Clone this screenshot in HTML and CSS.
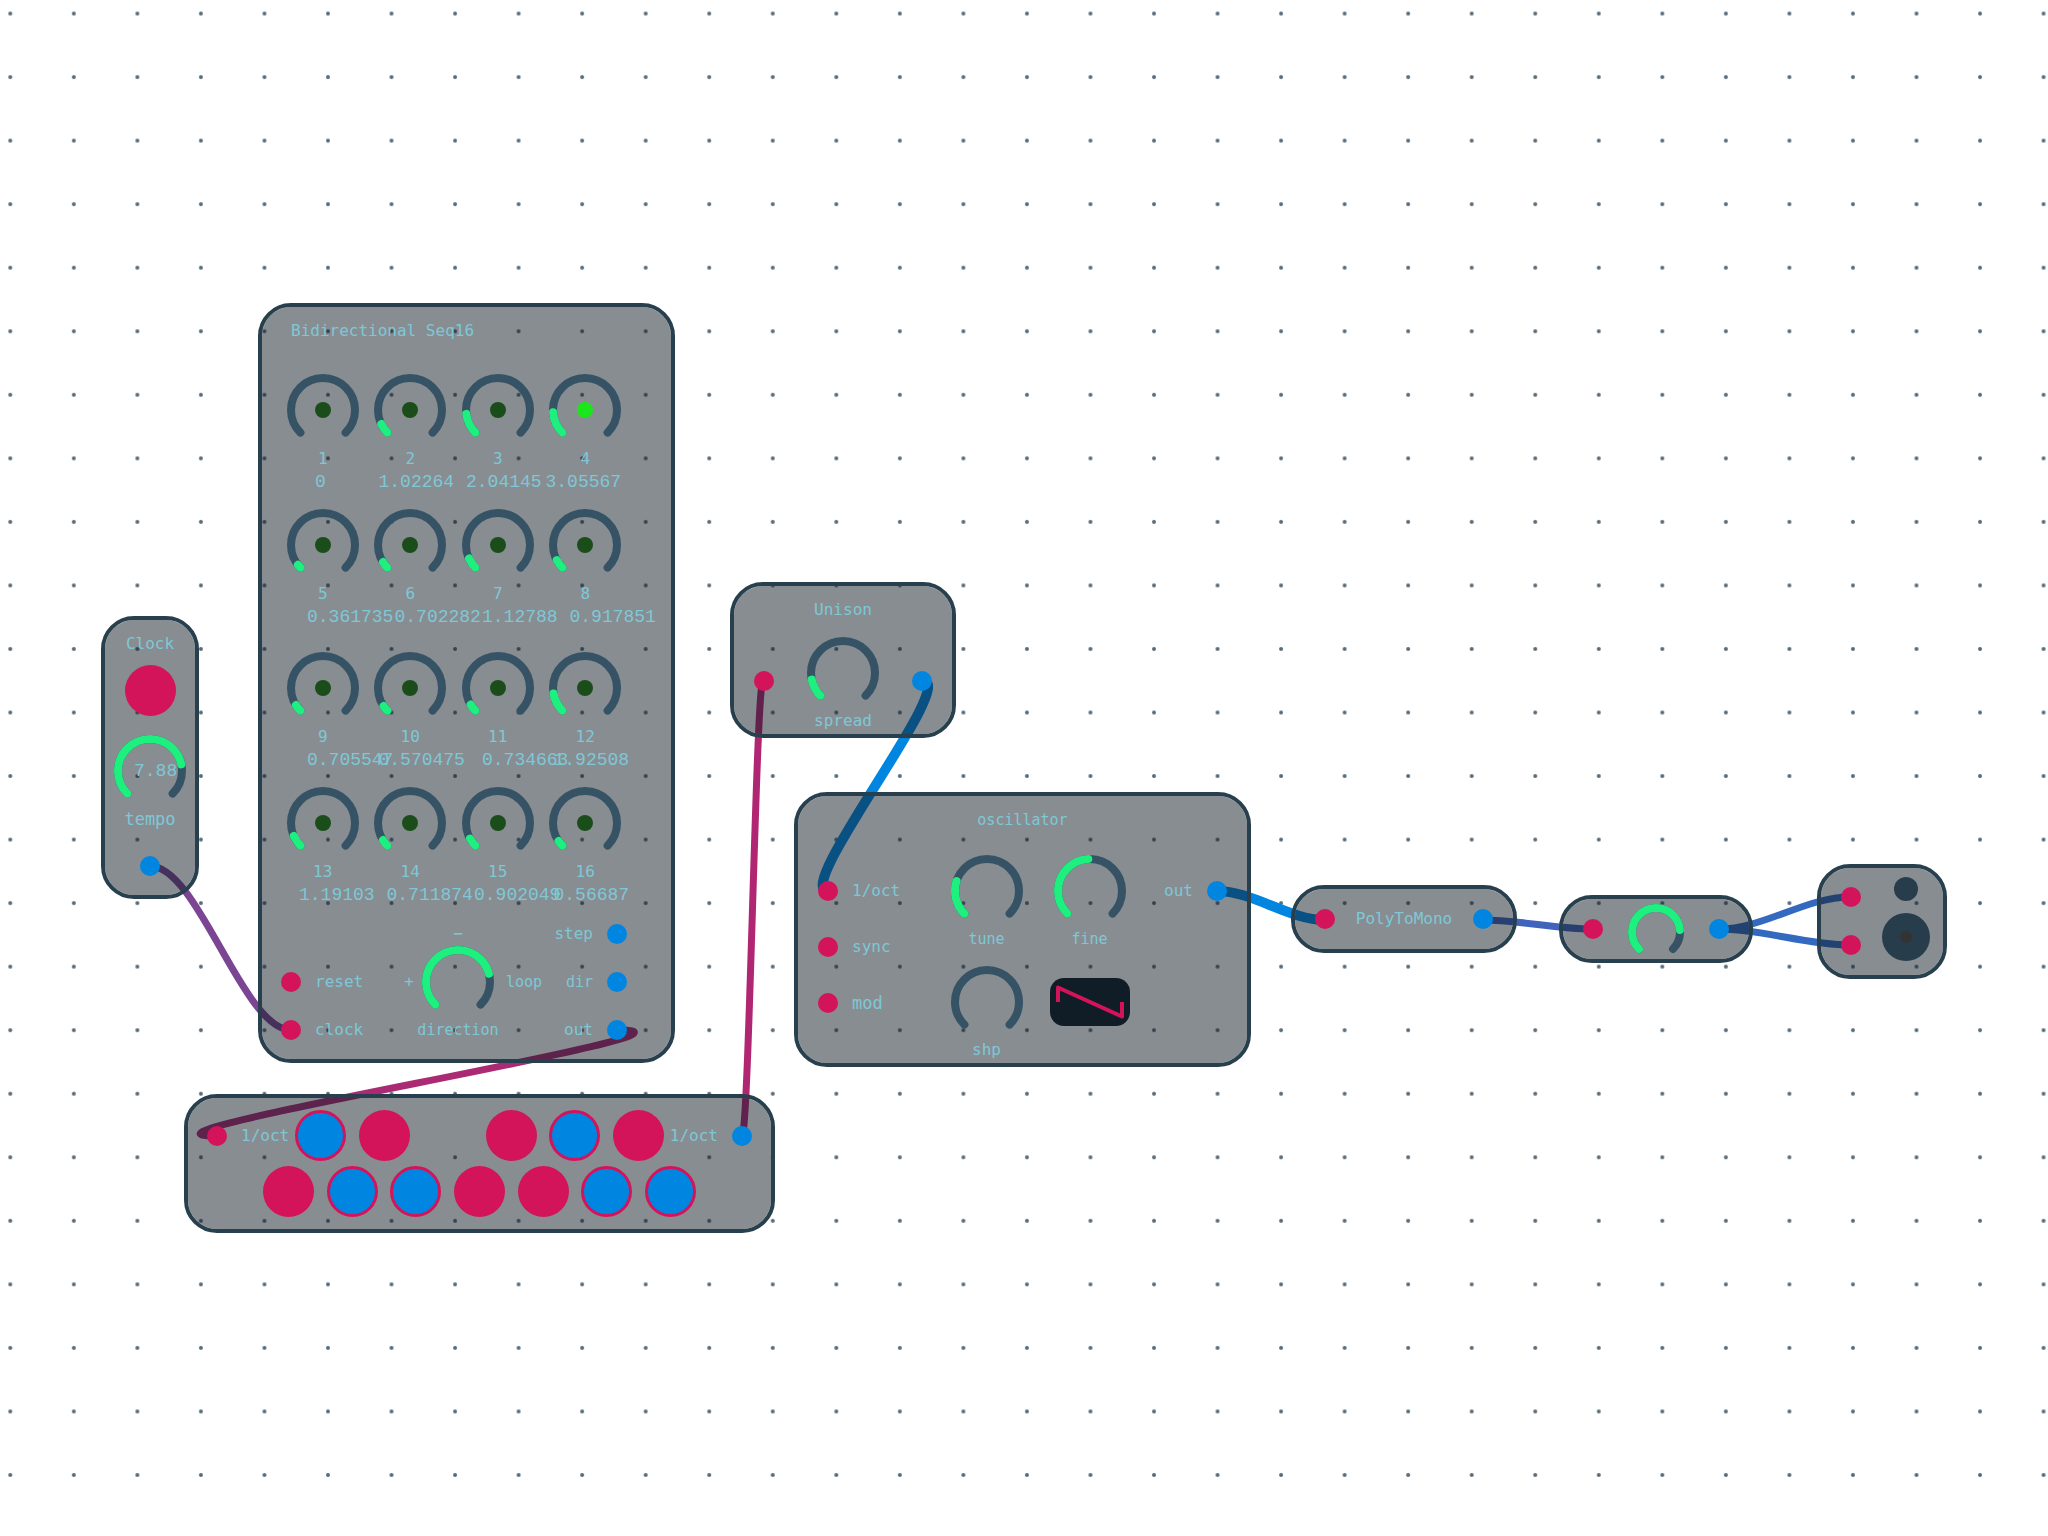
FILE: index.html
```html
<!DOCTYPE html>
<html lang="en">
<head>
<meta charset="utf-8">
<meta name="viewport" content="width=device-width, initial-scale=1">
<title>Modular patch</title>
<link rel="stylesheet" href="styles.css">
</head>
<body>
<svg class="defs" aria-hidden="true">
  <defs>
    <path id="arc" d="M-22.6 22.6A32 32 0 1 1 22.6 22.6" pathLength="270"/>
    <path id="arc-small" d="M-17 17A24 24 0 1 1 17 17" pathLength="270"/>
  </defs>
</svg>
<main class="patch">
  <svg class="backdrop" aria-hidden="true">
    <defs>
      <pattern id="dots" x="-21.5" y="-18.2" width="63.54" height="63.54" patternUnits="userSpaceOnUse">
        <circle cx="31.8" cy="31.8" r="2" fill="#566a79"/>
      </pattern>
    </defs>
    <rect width="100%" height="100%" fill="url(#dots)"/>
    <g class="cables">
      <path stroke="#7b4594" d="M150 866C198 866 243 1030 291 1030"/>
      <path stroke="#ab2a74" d="M617 1030C748 1030 88 1136 217 1136"/>
      <path stroke="#b12673" d="M742 1136C749 1136 756 681 763 681"/>
      <path class="poly" stroke="#0085e0" d="M923 681C959 681 791 891 828 891"/>
      <path class="poly" stroke="#0085e0" d="M1217 891C1253 891 1289 920 1325 920"/>
      <path stroke="#4063bb" d="M1483 920C1519 920 1556 929 1592 929"/>
      <path stroke="#336abf" d="M1719 929C1763 929 1806 897 1850 897"/>
      <path stroke="#336abf" d="M1719 929C1763 929 1806 945 1850 945"/>
    </g>
  </svg>

  <section class="module clock" aria-label="Clock">
    <h2>Clock</h2>
    <button class="pad" type="button" aria-label="Tap"></button>
    <label class="control">
      <span class="knob">
        <svg viewBox="-36 -36 72 72"><use href="#arc"/><use class="level" href="#arc" stroke-dasharray="213 400"/></svg>
        <span class="reading">7.88</span>
        <input type="range" min="0" max="270" value="213">
      </span>
      <span class="name large">tempo</span>
    </label>
    <button class="port out" type="button" aria-label="Clock out"></button>
  </section>

  <section class="module sequencer" aria-label="Bidirectional Seq16">
    <h2>Bidirectional Seq16</h2>
    <div class="bank">
      <label class="control"><span class="knob lamp"><svg viewBox="-36 -36 72 72"><use href="#arc"/><circle r="8"/></svg><input type="range" min="0" max="270" value="0"></span><span class="name">1</span><output class="in-5">0</output></label>
      <label class="control"><span class="knob lamp"><svg viewBox="-36 -36 72 72"><use href="#arc"/><use class="level" href="#arc" stroke-dasharray="19 400"/><circle r="8"/></svg><input type="range" min="0" max="270" value="19"></span><span class="name">2</span><output class="in-2">1.02264</output></label>
      <label class="control"><span class="knob lamp"><svg viewBox="-36 -36 72 72"><use href="#arc"/><use class="level" href="#arc" stroke-dasharray="38 400"/><circle r="8"/></svg><input type="range" min="0" max="270" value="38"></span><span class="name">3</span><output class="in-2">2.04145</output></label>
      <label class="control"><span class="knob lamp lit"><svg viewBox="-36 -36 72 72"><use href="#arc"/><use class="level" href="#arc" stroke-dasharray="41 400"/><circle r="8"/></svg><input type="range" min="0" max="270" value="41"></span><span class="name">4</span><output class="in-1">3.05567</output></label>
      <label class="control"><span class="knob lamp"><svg viewBox="-36 -36 72 72"><use href="#arc"/><use class="level" href="#arc" stroke-dasharray="7 400"/><circle r="8"/></svg><input type="range" min="0" max="270" value="7"></span><span class="name">5</span><output class="in-4">0.361735</output></label>
      <label class="control"><span class="knob lamp"><svg viewBox="-36 -36 72 72"><use href="#arc"/><use class="level" href="#arc" stroke-dasharray="13 400"/><circle r="8"/></svg><input type="range" min="0" max="270" value="13"></span><span class="name">6</span><output class="in-4">0.702282</output></label>
      <label class="control"><span class="knob lamp"><svg viewBox="-36 -36 72 72"><use href="#arc"/><use class="level" href="#arc" stroke-dasharray="20 400"/><circle r="8"/></svg><input type="range" min="0" max="270" value="20"></span><span class="name">7</span><output class="in-4">1.12788</output></label>
      <label class="control"><span class="knob lamp"><svg viewBox="-36 -36 72 72"><use href="#arc"/><use class="level" href="#arc" stroke-dasharray="17 400"/><circle r="8"/></svg><input type="range" min="0" max="270" value="17"></span><span class="name">8</span><output class="in-4">0.917851</output></label>
    </div>
    <div class="bank">
      <label class="control"><span class="knob lamp"><svg viewBox="-36 -36 72 72"><use href="#arc"/><use class="level" href="#arc" stroke-dasharray="13 400"/><circle r="8"/></svg><input type="range" min="0" max="270" value="13"></span><span class="name">9</span><output class="in-4">0.705547</output></label>
      <label class="control"><span class="knob lamp"><svg viewBox="-36 -36 72 72"><use href="#arc"/><use class="level" href="#arc" stroke-dasharray="11 400"/><circle r="8"/></svg><input type="range" min="0" max="270" value="11"></span><span class="name">10</span><output class="in-2">0.570475</output></label>
      <label class="control"><span class="knob lamp"><svg viewBox="-36 -36 72 72"><use href="#arc"/><use class="level" href="#arc" stroke-dasharray="14 400"/><circle r="8"/></svg><input type="range" min="0" max="270" value="14"></span><span class="name">11</span><output class="in-4">0.734663</output></label>
      <label class="control"><span class="knob lamp"><svg viewBox="-36 -36 72 72"><use href="#arc"/><use class="level" href="#arc" stroke-dasharray="35 400"/><circle r="8"/></svg><input type="range" min="0" max="270" value="35"></span><span class="name">12</span><output class="in-2">1.92508</output></label>
      <label class="control"><span class="knob lamp"><svg viewBox="-36 -36 72 72"><use href="#arc"/><use class="level" href="#arc" stroke-dasharray="21 400"/><circle r="8"/></svg><input type="range" min="0" max="270" value="21"></span><span class="name">13</span><output class="in-3">1.19103</output></label>
      <label class="control"><span class="knob lamp"><svg viewBox="-36 -36 72 72"><use href="#arc"/><use class="level" href="#arc" stroke-dasharray="13 400"/><circle r="8"/></svg><input type="range" min="0" max="270" value="13"></span><span class="name">14</span><output class="in-3">0.711874</output></label>
      <label class="control"><span class="knob lamp"><svg viewBox="-36 -36 72 72"><use href="#arc"/><use class="level" href="#arc" stroke-dasharray="16 400"/><circle r="8"/></svg><input type="range" min="0" max="270" value="16"></span><span class="name">15</span><output class="in-3">0.902049</output></label>
      <label class="control"><span class="knob lamp"><svg viewBox="-36 -36 72 72"><use href="#arc"/><use class="level" href="#arc" stroke-dasharray="11 400"/><circle r="8"/></svg><input type="range" min="0" max="270" value="11"></span><span class="name">16</span><output class="in-2">0.56687</output></label>
    </div>
    <div class="patchbay">
      <div class="jacks inputs">
        <div class="jack"><button class="port in" type="button" aria-labelledby="reset-name"></button><span class="name" id="reset-name">reset</span></div>
        <div class="jack"><button class="port in" type="button" aria-labelledby="clock-name"></button><span class="name" id="clock-name">clock</span></div>
      </div>
      <div class="direction">
        <span class="name">−</span>
        <div class="dial">
          <span class="name plus">+</span>
          <span class="knob">
            <svg viewBox="-36 -36 72 72"><use href="#arc"/><use class="level" href="#arc" stroke-dasharray="210 400"/></svg>
            <input type="range" id="direction" min="0" max="270" value="210">
          </span>
          <span class="name loop small">loop</span>
        </div>
        <label class="name small" for="direction">direction</label>
      </div>
      <div class="jacks">
        <div class="jack"><span class="name" id="step-name">step</span><button class="port out" type="button" aria-labelledby="step-name"></button></div>
        <div class="jack"><span class="name small" id="dir-name">dir</span><button class="port out" type="button" aria-labelledby="dir-name"></button></div>
        <div class="jack"><span class="name" id="out-name">out</span><button class="port out" type="button" aria-labelledby="out-name"></button></div>
      </div>
    </div>
  </section>

  <section class="module quantizer" aria-label="Quantizer">
    <div class="keyrow">
      <div class="jack"><button class="port in" type="button" aria-labelledby="qin"></button><span class="name" id="qin">1/oct</span></div>
      <div class="keys sharps">
        <button class="pad on" type="button" aria-label="C sharp"></button>
        <button class="pad" type="button" aria-label="D sharp"></button>
        <span></span>
        <button class="pad" type="button" aria-label="F sharp"></button>
        <button class="pad on" type="button" aria-label="G sharp"></button>
        <button class="pad" type="button" aria-label="A sharp"></button>
      </div>
      <div class="jack"><span class="name" id="qout">1/oct</span><button class="port out" type="button" aria-labelledby="qout"></button></div>
    </div>
    <div class="keys naturals">
      <button class="pad" type="button" aria-label="C"></button>
      <button class="pad on" type="button" aria-label="D"></button>
      <button class="pad on" type="button" aria-label="E"></button>
      <button class="pad" type="button" aria-label="F"></button>
      <button class="pad" type="button" aria-label="G"></button>
      <button class="pad on" type="button" aria-label="A"></button>
      <button class="pad on" type="button" aria-label="B"></button>
    </div>
  </section>

  <section class="module unison" aria-label="Unison">
    <h2>Unison</h2>
    <div class="through">
      <button class="port in" type="button" aria-label="Unison in"></button>
      <label class="control">
        <span class="knob">
          <svg viewBox="-36 -36 72 72"><use href="#arc"/><use class="level" href="#arc" stroke-dasharray="33 400"/></svg>
          <input type="range" min="0" max="270" value="33">
        </span>
        <span class="name">spread</span>
      </label>
      <button class="port out" type="button" aria-label="Unison out"></button>
    </div>
  </section>

  <section class="module oscillator" aria-label="Oscillator">
    <h2 class="small">oscillator</h2>
    <div class="osc-body">
      <div class="jacks">
        <div class="jack"><button class="port in" type="button" aria-labelledby="oct-name"></button><span class="name" id="oct-name">1/oct</span></div>
        <div class="jack"><button class="port in" type="button" aria-labelledby="sync-name"></button><span class="name" id="sync-name">sync</span></div>
        <div class="jack"><button class="port in" type="button" aria-labelledby="mod-name"></button><span class="name large" id="mod-name">mod</span></div>
      </div>
      <div class="osc-knobs">
        <label class="control"><span class="knob"><svg viewBox="-36 -36 72 72"><use href="#arc"/><use class="level" href="#arc" stroke-dasharray="63 400"/></svg><input type="range" min="0" max="270" value="63"></span><span class="name small">tune</span></label>
        <label class="control"><span class="knob"><svg viewBox="-36 -36 72 72"><use href="#arc"/><use class="level" href="#arc" stroke-dasharray="132 400"/></svg><input type="range" min="0" max="270" value="132"></span><span class="name small">fine</span></label>
        <label class="control"><span class="knob"><svg viewBox="-36 -36 72 72"><use href="#arc"/></svg><input type="range" min="0" max="270" value="0"></span><span class="name">shp</span></label>
        <svg class="wave" viewBox="0 0 80 48" role="img" aria-label="Sawtooth wave"><path d="M8 24V9.500L72 38.500V24"/></svg>
      </div>
      <div class="jacks">
        <div class="jack"><span class="name" id="osc-out">out</span><button class="port out" type="button" aria-labelledby="osc-out"></button></div>
      </div>
    </div>
  </section>

  <section class="module bar polytomono" aria-label="PolyToMono">
    <button class="port in" type="button" aria-label="Poly in"></button>
    <h2>PolyToMono</h2>
    <button class="port out" type="button" aria-label="Mono out"></button>
  </section>

  <section class="module bar volume" aria-label="Volume">
    <button class="port in" type="button" aria-label="Volume in"></button>
    <span class="knob compact">
      <svg viewBox="-28 -28 56 56"><use href="#arc-small"/><use class="level" href="#arc-small" stroke-dasharray="220 400"/></svg>
      <input type="range" min="0" max="270" value="220" aria-label="Volume">
    </span>
    <button class="port out" type="button" aria-label="Volume out"></button>
  </section>

  <section class="module speaker" aria-label="Audio output">
    <div class="stereo">
      <button class="port in" type="button" aria-label="Left"></button>
      <button class="port in" type="button" aria-label="Right"></button>
    </div>
    <svg viewBox="0 0 48 84" aria-hidden="true"><circle cx="24" cy="12" r="12"/><circle cx="24" cy="60" r="24"/><circle class="cone" cx="24" cy="60" r="6"/></svg>
  </section>
</main>
</body>
</html>
```
FILE: styles.css
```css
:root {
  --panel: rgba(18, 28, 38, 0.5);
  --edge: #283f4e;
  --track: #365366;
  --level: #1ef080;
  --in: #d4145a;
  --out: #0085e0;
  --text: #7ec8d6;
}

* {
  box-sizing: border-box;
}

body {
  margin: 0;
  background: #fff;
  color: var(--text);
  font: 16px/24px "DejaVu Sans Mono", monospace;
}

.defs {
  position: absolute;
  width: 0;
  height: 0;
}

.patch {
  position: relative;
  min-height: 100vh;
  overflow: hidden;
}

.backdrop {
  position: absolute;
  inset: 0;
  width: 100%;
  height: 100%;
}

.cables {
  fill: none;
  stroke-width: 7;
}

.cables .poly {
  stroke-width: 10;
}

/* Modules sit freely on the canvas */
.module {
  position: absolute;
  display: flex;
  flex-direction: column;
  align-items: center;
  padding-top: 12px;
  border: 4px solid var(--edge);
  border-radius: 33px;
  background: var(--panel);
  background-clip: padding-box;
}

.clock { left: 101px; top: 616px; width: 98px; padding-bottom: 19px; }
.sequencer { left: 258px; top: 303px; width: 417px; padding-bottom: 5px; }
.quantizer { left: 184px; top: 1094px; width: 591px; padding-bottom: 12px; }
.unison { left: 730px; top: 582px; width: 226px; padding-bottom: 1px; }
.oscillator { left: 794px; top: 792px; width: 457px; padding-bottom: 1px; }
.polytomono { left: 1291px; top: 885px; width: 226px; }
.volume { left: 1559px; top: 895px; width: 194px; }
.speaker { left: 1817px; top: 864px; width: 130px; }

h2 {
  margin: 0;
  font-size: 16px;
  font-weight: 400;
}

.name {
  white-space: nowrap;
}

.small { font-size: 15px; }
.large { font-size: 17px; }

/* Buttons and ports */
.port,
.pad {
  flex: none;
  padding: 0;
  border: 0;
  border-radius: 50%;
  background: var(--in);
  cursor: pointer;
}

.port {
  width: 20px;
  height: 20px;
}

.port.out {
  background: var(--out);
}

.pad {
  width: 51px;
  height: 51px;
}

.pad.on {
  border: 3px solid var(--in);
  background: var(--out);
}

.jack {
  display: flex;
  align-items: center;
  gap: 14px;
}

/* Knobs */
.control {
  display: flex;
  flex-direction: column;
  align-items: center;
  min-width: 0;
}

.knob {
  position: relative;
  display: block;
  width: 72px;
  height: 72px;
}

.knob.compact {
  width: 56px;
  height: 56px;
}

.knob svg {
  display: block;
  width: 100%;
  height: 100%;
  overflow: visible;
  fill: none;
  stroke: var(--track);
  stroke-width: 8;
  stroke-linecap: round;
}

.knob .level {
  stroke: var(--level);
}

.knob circle {
  fill: #1b4d1b;
  stroke: none;
}

.knob.lit circle {
  fill: #1be61b;
}

.knob input {
  position: absolute;
  inset: 0;
  width: 100%;
  height: 100%;
  margin: 0;
  opacity: 0;
  cursor: pointer;
}

.reading,
output {
  font: 18px/24px "Liberation Mono", monospace;
  white-space: nowrap;
}

.reading {
  position: absolute;
  left: 20px;
  top: 24px;
}

/* Clock */
.clock .pad { margin-top: 9px; }
.clock .control { margin-top: 19px; }
.clock .port { margin-top: 25px; }

/* Sequencer */
.sequencer {
  align-items: flex-start;
  padding-left: 17px;
}

.sequencer h2 {
  margin: 0 0 31px 12px;
}

.bank {
  display: grid;
  grid-template-columns: repeat(4, 1fr);
  row-gap: 15px;
  width: 350px;
}

.bank + .bank {
  margin-top: 23px;
}

.bank .name {
  padding-top: 1px;
  line-height: 23px;
}

.bank output {
  align-self: flex-start;
}

.in-1 { margin-left: 4px; }
.in-2 { margin-left: 12px; }
.in-3 { margin-left: 20px; }
.in-4 { margin-left: 28px; }
.in-5 { margin-left: 36px; }

.patchbay {
  display: grid;
  grid-template-columns: 92px 170px 84px;
  margin: 3px 0 0 2px;
}

.patchbay .jack {
  height: 48px;
}

.patchbay .inputs {
  padding-top: 48px;
}

.jacks:last-child .jack {
  justify-content: flex-end;
}

.direction {
  display: grid;
  grid-template-rows: repeat(3, 48px);
  align-items: center;
  justify-items: center;
}

.dial {
  display: grid;
  grid-template-columns: 49px 72px 49px;
  align-items: center;
}

.plus {
  justify-self: end;
  padding-right: 8px;
}

.loop {
  padding-left: 12px;
}

/* Quantizer */
.keyrow {
  display: flex;
  align-items: center;
  margin-bottom: 5px;
}

.keyrow .jack {
  width: 82px;
}

.keyrow .jack:last-child {
  justify-content: flex-end;
}

.keys {
  display: grid;
  justify-items: center;
}

.sharps {
  grid-template-columns: repeat(6, 1fr);
  width: 381px;
}

.naturals {
  grid-template-columns: repeat(7, 1fr);
  width: 445px;
}

/* Unison */
.through {
  display: flex;
  align-items: center;
  justify-content: space-between;
  width: 100%;
  margin-top: 15px;
  padding: 0 20px;
}

.through .control {
  width: 72px;
}

.through .port {
  margin-bottom: 8px;
}

/* Oscillator */
.osc-body {
  display: grid;
  grid-template-columns: 117px 206px 1fr;
  width: 100%;
  margin-top: 23px;
  padding: 0 20px;
}

.osc-body .jacks {
  display: flex;
  flex-direction: column;
  gap: 32px;
  padding-top: 24px;
}

.osc-knobs {
  display: grid;
  grid-template-columns: 1fr 1fr;
  row-gap: 15px;
  justify-items: center;
}

.wave {
  width: 80px;
  height: 48px;
  margin-top: 12px;
  border-radius: 14px;
  background: #111d26;
  fill: none;
  stroke: var(--in);
  stroke-width: 4;
  stroke-linejoin: round;
}

/* Single-row modules */
.bar {
  flex-direction: row;
  justify-content: space-between;
  height: 68px;
  padding: 0 20px;
}

.volume .knob {
  margin-top: 6px;
}

/* Speaker */
.speaker {
  flex-direction: row;
  align-items: flex-start;
  justify-content: space-between;
  padding: 9px 13px 14px 20px;
}

.stereo {
  display: flex;
  flex-direction: column;
  gap: 28px;
  padding-top: 10px;
}

.speaker svg {
  width: 48px;
  height: 84px;
  fill: #283d4b;
}

.speaker .cone {
  fill: #333;
}
```
